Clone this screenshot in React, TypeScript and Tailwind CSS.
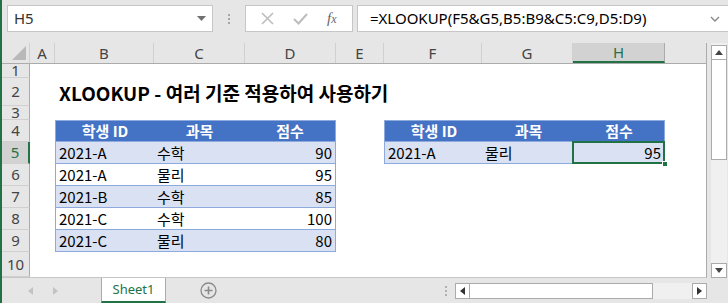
import React from 'react';

const cols = [
  { name: 'A', w: 'w-[25px]' },
  { name: 'B', w: 'w-[99px]' },
  { name: 'C', w: 'w-[91px]' },
  { name: 'D', w: 'w-[91px]' },
  { name: 'E', w: 'w-[48px]' },
  { name: 'F', w: 'w-[98px]' },
  { name: 'G', w: 'w-[91px]' },
  { name: 'H', w: 'w-[92px]' },
];

const rowHeights: Record<number, string> = {
  1: 'h-[14px]',
  2: 'h-[29px]',
  3: 'h-[14px]',
  4: 'h-[22px]',
  5: 'h-[22px]',
  6: 'h-[22px]',
  7: 'h-[22px]',
  8: 'h-[22px]',
  9: 'h-[22px]',
  10: 'h-[25px]',
};

const scores = [
  { id: '2021-A', subject: '수학', score: 90 },
  { id: '2021-A', subject: '물리', score: 95 },
  { id: '2021-B', subject: '수학', score: 85 },
  { id: '2021-C', subject: '수학', score: 100 },
  { id: '2021-C', subject: '물리', score: 80 },
];

const cellFont = "font-['Noto_Sans_CJK_KR',sans-serif] text-[15px] text-black";

function HeaderCells() {
  return (
    <>
      <div className="w-[99px] h-full flex items-center justify-center bg-[#4472c4] border-y border-l border-[#8ea9db] text-white font-bold">학생 ID</div>
      <div className="w-[91px] h-full flex items-center justify-center bg-[#4472c4] border-y border-[#8ea9db] text-white font-bold">과목</div>
      <div className="w-[91px] h-full flex items-center justify-center bg-[#4472c4] border-y border-r border-[#8ea9db] text-white font-bold">점수</div>
    </>
  );
}

function DataCells({ row, odd }: { row: { id: string; subject: string; score: number }; odd: boolean }) {
  const bg = odd ? 'bg-[#d9e1f2]' : 'bg-white';
  return (
    <>
      <div className={`w-[99px] h-full flex items-center pl-[3px] ${bg} border-b border-l border-[#8ea9db]`}>{row.id}</div>
      <div className={`w-[91px] h-full flex items-center pl-[3px] ${bg} border-b border-[#8ea9db]`}>{row.subject}</div>
      <div className={`w-[91px] h-full flex items-center justify-end pr-[3px] ${bg} border-b border-r border-[#8ea9db]`}>{row.score}</div>
    </>
  );
}

function Row({ n }: { n: number }) {
  const selected = n === 5;
  return (
    <div className={`flex ${rowHeights[n]}`}>
      <div
        className={`w-[28px] shrink-0 flex items-center justify-center font-['Noto_Sans',sans-serif] text-[15px] overflow-hidden border-b border-[#d0d0d0] ${
          selected ? 'bg-[#d2d2d2] text-[#217346] border-r-2 border-r-[#217346]' : 'bg-[#e6e6e6] text-[#444] border-r border-r-[#ababab]'
        }`}
      >
        <span className="leading-none">{n}</span>
      </div>
      <div className={`flex ${cellFont}`}>
        <div className="w-[25px]" />
        {n === 2 && (
          <div className="w-[99px] flex items-center pl-[4px] pt-[1px]">
            <span className="whitespace-nowrap font-bold text-[19px] leading-none">XLOOKUP - 여러 기준 적용하여 사용하기</span>
          </div>
        )}
        {n === 4 && <HeaderCells />}
        {n >= 5 && n <= 9 && <DataCells row={scores[n - 5]} odd={n % 2 === 1} />}
        {n === 4 && (
          <>
            <div className="w-[48px]" />
            <HeaderCells />
          </>
        )}
        {n === 5 && (
          <>
            <div className="w-[48px]" />
            <div className="w-[98px] h-full flex items-center pl-[3px] bg-[#d9e1f2] border-b border-l border-[#8ea9db]">2021-A</div>
            <div className="w-[91px] h-full flex items-center pl-[3px] bg-[#d9e1f2] border-b border-[#8ea9db]">물리</div>
            <div className="relative w-[92px] h-full flex items-center justify-end pr-[3px] bg-[#d9e1f2] border-b border-r border-[#8ea9db]">
              95
              <div className="absolute -left-px -top-px -right-px -bottom-px border-2 border-[#217346]" />
              <div className="absolute -right-[4px] -bottom-[4px] w-[6px] h-[6px] bg-[#217346] border border-white" />
            </div>
          </>
        )}
      </div>
    </div>
  );
}

export default function App() {
  return (
    <div className="w-[728px] h-[303px] overflow-hidden bg-[#e6e6e6] border-l-2 border-[#217346] flex flex-col select-none">
      {/* formula bar */}
      <div className="h-[43px] shrink-0 flex items-start pt-[5px] pl-[5px]">
        <div className="w-[206px] h-[27px] bg-white border border-[#c6c6c6] flex items-center justify-between pl-[6px] pr-[6px]">
          <span className="font-['Noto_Sans',sans-serif] text-[15px] text-[#333]">H5</span>
          <svg width="9" height="5" viewBox="0 0 9 5"><polygon points="0,0 9,0 4.5,5" fill="#707070" /></svg>
        </div>
        <div className="w-[32px] h-[27px] flex flex-col items-center justify-center gap-[2px]">
          <div className="w-[2px] h-[2px] bg-[#a6a6a6]" />
          <div className="w-[2px] h-[2px] bg-[#a6a6a6]" />
          <div className="w-[2px] h-[2px] bg-[#a6a6a6]" />
        </div>
        <div className="w-[108px] h-[27px] bg-white border border-[#c6c6c6] flex items-center justify-around px-[6px]">
          <svg width="13" height="13" viewBox="0 0 13 13"><path d="M1 1 L12 12 M12 1 L1 12" stroke="#bdbdbd" strokeWidth="1.6" /></svg>
          <svg width="15" height="12" viewBox="0 0 15 12"><path d="M1 6 L5.5 10.5 L14 1" stroke="#bdbdbd" strokeWidth="2" fill="none" /></svg>
          <span className="font-['Liberation_Serif',serif] italic text-[15px] text-[#666] leading-none">f<span className="text-[12px]">x</span></span>
        </div>
        <div className="ml-[4px] flex-1 h-[27px] bg-white border border-[#c6c6c6] border-r-0 flex items-center justify-between pl-[12px] pr-[8px]">
          <span className="font-['Noto_Sans',sans-serif] text-[15px] text-black">=XLOOKUP(F5&amp;G5,B5:B9&amp;C5:C9,D5:D9)</span>
          <svg width="10" height="6" viewBox="0 0 10 6"><path d="M1 1 L5 5 L9 1" stroke="#888" strokeWidth="1.4" fill="none" /></svg>
        </div>
      </div>

      {/* sheet */}
      <div className="flex h-[235px] shrink-0">
        <div className="w-[705px] flex flex-col bg-white border-r border-[#ababab] border-b border-b-[#c6c6c6]">
          <div className="flex h-[21px] shrink-0 bg-[#e6e6e6] border-b border-[#ababab] font-['Noto_Sans',sans-serif] text-[15px] text-[#444]">
            <div className="w-[28px] relative border-r border-[#d0d0d0]">
              <svg className="absolute right-[3px] bottom-[3px]" width="14" height="14" viewBox="0 0 14 14"><polygon points="14,0 14,14 0,14" fill="#b9b9b9" /></svg>
            </div>
            {cols.map((c) => (
              <div
                key={c.name}
                className={`${c.w} flex items-center justify-center border-r ${
                  c.name === 'H' ? 'bg-[#d2d2d2] border-b-2 border-b-[#217346] text-[#217346] border-r-[#ababab]' : 'border-r-[#d0d0d0]'
                }`}
              >
                {c.name}
              </div>
            ))}
            <div className="flex-1" />
          </div>
          {[1, 2, 3, 4, 5, 6, 7, 8, 9, 10].map((n) => (
            <Row key={n} n={n} />
          ))}
        </div>
        <div className="w-[4px]" />
        <div className="w-[16px] flex flex-col bg-[#f0f0f0] pt-[2px]">
          <div className="h-[15px] bg-white border border-[#ababab] flex items-center justify-center">
            <svg width="8" height="5" viewBox="0 0 8 5"><polygon points="4,0 8,5 0,5" fill="#444" /></svg>
          </div>
          <div className="h-[100px] bg-white border-x border-b border-[#ababab]" />
          <div className="flex-1" />
          <div className="h-[15px] bg-white border border-[#ababab] flex items-center justify-center">
            <svg width="8" height="5" viewBox="0 0 8 5"><polygon points="0,0 8,0 4,5" fill="#444" /></svg>
          </div>
        </div>
      </div>

      {/* sheet tabs */}
      <div className="h-[25px] flex items-stretch">
        <div className="w-[99px] flex items-center pl-[26px] gap-[20px]">
          <svg width="5" height="8" viewBox="0 0 5 8"><polygon points="5,0 5,8 0,4" fill="#c3c3c3" /></svg>
          <svg width="5" height="8" viewBox="0 0 5 8"><polygon points="0,0 0,8 5,4" fill="#c3c3c3" /></svg>
        </div>
        <div className="w-[65px] bg-white border-x border-[#ababab] border-b-2 border-b-[#217346] flex items-center justify-center font-['Noto_Sans',sans-serif] text-[13px] text-[#217346]">
          Sheet1
        </div>
        <div className="w-[270px] flex items-center pl-[34px]">
          <svg width="17" height="17" viewBox="0 0 17 17">
            <circle cx="8.5" cy="8.5" r="7.5" stroke="#8a8a8a" strokeWidth="1.3" fill="none" />
            <path d="M8.5 4.5 V12.5 M4.5 8.5 H12.5" stroke="#8a8a8a" strokeWidth="1.6" />
          </svg>
        </div>
        <div className="w-[19px] flex flex-col items-center justify-center gap-[2px]">
          <div className="w-[2px] h-[2px] bg-[#b0b0b0]" />
          <div className="w-[2px] h-[2px] bg-[#b0b0b0]" />
          <div className="w-[2px] h-[2px] bg-[#b0b0b0]" />
        </div>
        <div className="flex items-center">
          <div className="w-[252px] h-[16px] flex bg-[#f0f0f0]">
            <div className="w-[15px] bg-white border border-[#ababab] flex items-center justify-center">
              <svg width="5" height="8" viewBox="0 0 5 8"><polygon points="5,0 5,8 0,4" fill="#333" /></svg>
            </div>
            <div className="w-[183px] bg-white border-y border-r border-[#ababab]" />
            <div className="flex-1" />
            <div className="w-[15px] bg-white border border-[#ababab] flex items-center justify-center">
              <svg width="5" height="8" viewBox="0 0 5 8"><polygon points="0,0 0,8 5,4" fill="#333" /></svg>
            </div>
          </div>
        </div>
      </div>
    </div>
  );
}
